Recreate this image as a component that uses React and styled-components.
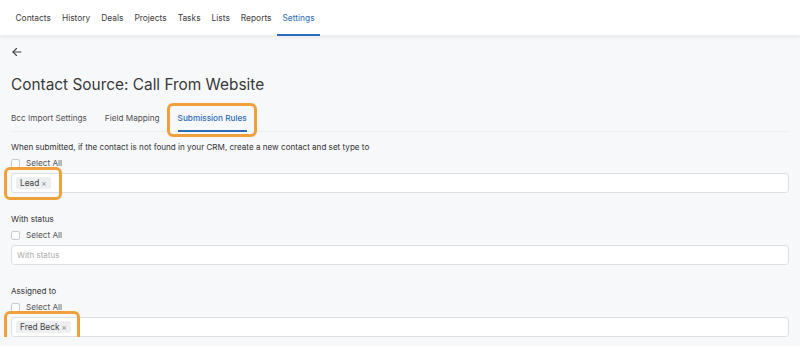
import styled, { createGlobalStyle } from "styled-components"

const Global = createGlobalStyle`
  body {
    margin: 0;
    background: #f7f8fa;
    font-family: Inter, "Noto Sans", sans-serif;
    color: #333;
  }
`

const navItems = ["Contacts", "History", "Deals", "Projects", "Tasks", "Lists", "Reports", "Settings"]

const App = () => {
  return (
    <>
      <Global />
      <Header>
        {navItems.map((n) => (
          <NavItem key={n} active={n === "Settings"}>{n}</NavItem>
        ))}
      </Header>
      <Page>
        <Back>
          <svg width="12" height="12" viewBox="0 0 24 24" fill="none" stroke="#444" strokeWidth="2.2" strokeLinecap="round" strokeLinejoin="round">
            <path d="M20 12H4" />
            <path d="M11 5l-7 7 7 7" />
          </svg>
        </Back>
        <Title>Contact Source: Call From Website</Title>
        <Tabs>
          <Tab>Bcc Import Settings</Tab>
          <Tab>Field Mapping</Tab>
          <Tab active>
            Submission Rules
            <Highlight $inset="-6px -10px -7px -11px" />
          </Tab>
        </Tabs>

        <Label first>When submitted, if the contact is not found in your CRM, create a new contact and set type to</Label>
        <SelectAll><Box />Select All</SelectAll>
        <Field>
          <Chip>
            Lead <X>×</X>
            <Highlight $inset="-10px -11px -11px -12px" />
          </Chip>
        </Field>

        <Label>With status</Label>
        <SelectAll><Box />Select All</SelectAll>
        <Field>
          <Placeholder>With status</Placeholder>
        </Field>

        <Label>Assigned to</Label>
        <SelectAll><Box />Select All</SelectAll>
        <Field>
          <Chip>
            Fred Beck <X>×</X>
            <Highlight $inset="-10px -9px -11px -12px" />
          </Chip>
        </Field>
      </Page>
    </>
  )
}

export default App

const Header = styled.div`
display: flex;
align-items: stretch;
height: 35px;
padding-left: 10px;
background: #fff;
box-shadow: 0 1px 4px rgba(0, 0, 0, 0.07);
border-bottom: 1px solid #eceef1;
`

const NavItem = styled.div`
display: flex;
align-items: center;
padding: 0 5.5px;
font-size: 8.4px;
color: ${(p) => (p.active ? "#2b6cb8" : "#3d3d3d")};
border-bottom: 2px solid ${(p) => (p.active ? "#2b6cb8" : "transparent")};
margin-bottom: -1px;
padding-top: 2px;
`

const Page = styled.div`
padding: 0 11px;
`

const Back = styled.div`
display: flex;
height: 12px;
margin-top: 10px;
`

const Title = styled.h1`
margin: 16px 0 0;
font-size: 15.4px;
font-weight: 400;
line-height: 22px;
color: #383838;
`

const Tabs = styled.div`
display: flex;
margin-top: 13px;
border-bottom: 1px solid #eef0f2;
`

const Tab = styled.div`
position: relative;
margin-right: 18px;
padding: 4px 0 6px;
font-size: 8.2px;
line-height: 11px;
font-weight: ${(p) => (p.active ? 500 : 400)};
color: ${(p) => (p.active ? "#2b6cb8" : "#505050")};
border-bottom: 2px solid ${(p) => (p.active ? "#2b6cb8" : "transparent")};
margin-bottom: -1px;
`

const Highlight = styled.span`
position: absolute;
inset: ${(p) => p.$inset};
border: 3px solid #f0a03a;
border-radius: 6px;
pointer-events: none;
`

const Label = styled.div`
margin-top: ${(p) => (p.first ? "10px" : "21px")};
font-size: 8.1px;
line-height: 11px;
color: #333;
`

const SelectAll = styled.label`
display: flex;
align-items: center;
gap: 6px;
margin-top: 5px;
font-size: 8.2px;
line-height: 11px;
color: #555;
`

const Box = styled.span`
width: 7px;
height: 7px;
border: 1px solid #c9ccd1;
border-radius: 2px;
background: #fff;
`

const Field = styled.div`
display: flex;
align-items: center;
height: 18px;
margin-top: 4px;
padding: 0 4px;
background: #fff;
border: 1px solid #dcdfe3;
border-radius: 3px;
`

const Chip = styled.span`
position: relative;
display: inline-flex;
align-items: center;
gap: 2px;
height: 12px;
padding: 0 4px;
background: #eeeff1;
border-radius: 2px;
font-size: 8.3px;
color: #444;
`

const X = styled.span`
color: #888;
font-size: 8px;
`

const Placeholder = styled.span`
padding-left: 1px;
font-size: 8px;
color: #aaa;
`
